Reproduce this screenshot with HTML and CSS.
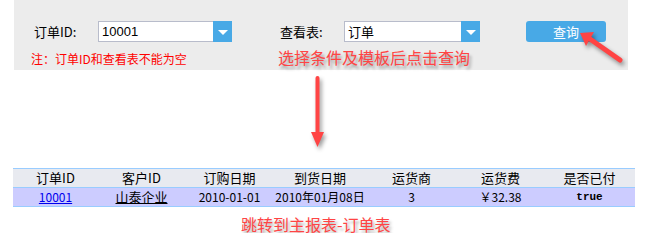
FILE: index.html
```html
<!DOCTYPE html>
<html lang="zh-CN">
<head>
    <meta charset="UTF-8">
    <title>订单查询</title>
    <link rel="stylesheet" href="styles.css">
</head>
<body>
    <div class="panel">
        <div class="filter-row">
            <span class="label label-id">订单ID:</span>
            <div class="combo combo-id">
                <span class="combo-text num">10001</span>
                <span class="combo-btn"><i class="tri"></i></span>
            </div>
            <span class="label label-view">查看表:</span>
            <div class="combo combo-view">
                <span class="combo-text">订单</span>
                <span class="combo-btn"><i class="tri"></i></span>
            </div>
            <button class="query-btn">查询</button>
        </div>
        <div class="note">注：订单ID和查看表不能为空</div>

        <div class="hint hint-top">选择条件及模板后点击查询</div>
        <svg class="arrow-side" width="60" height="40" viewBox="0 0 60 40">
            <line x1="52" y1="30" x2="22" y2="9" stroke="#ff4444" stroke-width="5" stroke-linecap="round"/>
            <polygon points="12,3 26,2 18,16" fill="#ff4444"/>
        </svg>
    </div>

    <div class="down">
        <svg class="arrow-down" width="14" height="72" viewBox="0 0 14 72">
            <rect x="4.5" y="0" width="4" height="58" rx="2" fill="#ff4444"/>
            <polygon points="0,56 13,56 6.5,71" fill="#ff4444"/>
        </svg>
    </div>

    <table class="report">
        <tr class="head">
            <td class="c1">订单ID</td>
            <td class="c2">客户ID</td>
            <td class="c3">订购日期</td>
            <td class="c4">到货日期</td>
            <td class="c5">运货商</td>
            <td class="c6">运货费</td>
            <td class="c7">是否已付</td>
        </tr>
        <tr class="data">
            <td><a href="#" class="link">10001</a></td>
            <td><span class="cust">山泰企业</span></td>
            <td>2010-01-01</td>
            <td>2010年01月08日</td>
            <td>3</td>
            <td>￥32.38</td>
            <td class="bool">true</td>
        </tr>
    </table>

    <div class="hint hint-bottom">跳转到主报表-订单表</div>
</body>
</html>
```

FILE: styles.css
```css
body {
    margin: 0;
    background: #ffffff;
    font-family: "Noto Sans CJK SC", sans-serif;
    font-size: 12px;
    color: #000;
}
.panel {
    position: relative;
    margin-left: 14px;
    width: 614px;
    height: 70px;
    background: #ececec;
}
.filter-row {
    display: flex;
    align-items: center;
    padding-top: 21px;
    height: 21px;
}
.label {
    font-size: 13px;
    width: 64px;
}
.label-id {
    margin-left: 20px;
}
.label-view {
    margin-left: 48px;
}
.combo {
    display: flex;
    box-sizing: border-box;
    height: 21px;
    border: 1px solid #b8bccb;
    background: #fff;
}
.combo-id {
    width: 134px;
}
.combo-view {
    width: 136px;
}
.combo-text {
    flex: 1;
    padding-left: 3px;
    font-size: 13px;
    line-height: 19px;
}
.combo-text.num {
    font-family: "Liberation Sans", sans-serif;
    color: #000;
}
.combo-btn {
    width: 19px;
    margin: -1px -1px -1px 0;
    background: #48a9e6;
    display: flex;
    align-items: center;
    justify-content: center;
}
.tri {
    width: 0;
    height: 0;
    border-left: 5px solid transparent;
    border-right: 5px solid transparent;
    border-top: 5px solid #fff;
    margin-top: 2px;
}
.query-btn {
    margin-left: 46px;
    width: 80px;
    height: 21px;
    border: none;
    border-radius: 3px;
    background: #48a9e6;
    color: #fff;
    font-family: "Noto Sans CJK SC", sans-serif;
    font-size: 13px;
    line-height: 21px;
    padding: 0;
}
.note {
    margin: 10px 0 0 17px;
    color: #ff0000;
    font-size: 12px;
    line-height: 14px;
}
.hint {
    color: #ff4444;
    font-size: 16px;
    line-height: 18px;
    text-shadow: 2px 3px 3px rgba(0, 0, 0, 0.35);
}
.hint-top {
    position: absolute;
    left: 264px;
    top: 48px;
}
.arrow-side {
    position: absolute;
    left: 554px;
    top: 30px;
    filter: drop-shadow(2px 3px 2px rgba(0, 0, 0, 0.4));
}
.down {
    box-sizing: border-box;
    height: 98px;
    padding: 6px 0 0 311px;
}
.arrow-down {
    display: block;
    filter: drop-shadow(2px 3px 2px rgba(0, 0, 0, 0.4));
}
.report {
    margin-left: 13px;
    width: 622px;
    border-collapse: collapse;
    table-layout: fixed;
}
.report td {
    height: 18px;
    padding: 0;
    text-align: center;
    border-top: 1px solid #99ccff;
    border-bottom: 1px solid #99ccff;
    font-size: 12px;
    line-height: 18px;
}
.head td {
    background: #e8eaf0;
    font-size: 13px;
}
.data td {
    background: #ccccff;
}
.c1 { width: 85px; }
.c2 { width: 87px; }
.c3 { width: 89px; }
.c4 { width: 92px; }
.c5 { width: 91px; }
.c6 { width: 87px; }
.c7 { width: 91px; }
.link {
    color: #0000ee;
    text-decoration: underline;
}
.cust {
    font-size: 13px;
    text-decoration: underline;
}
.bool {
    font-family: "Liberation Mono", monospace;
    font-weight: bold;
    font-size: 11px !important;
}
.hint-bottom {
    margin: 8px 0 0 241px;
}
```
